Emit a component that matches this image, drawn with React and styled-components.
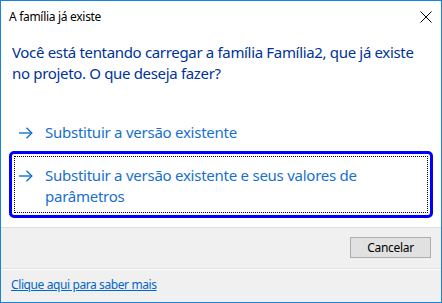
import styled, { createGlobalStyle } from 'styled-components'

const GlobalStyle = createGlobalStyle`
    html, body {
        margin: 0;
        padding: 0;
        background: #ffffff;
    }
    * {
        box-sizing: border-box;
    }
`

const Window = styled.div`
    width: 442px;
    height: 303px;
    border: 1px solid #1883d7;
    background: #ffffff;
    display: flex;
    flex-direction: column;
    font-family: "Noto Sans", "Open Sans", sans-serif;
`

const TitleBar = styled.div`
    height: 30px;
    display: flex;
    align-items: center;
    justify-content: space-between;
    padding: 0 9px 0 8px;
    font-size: 12px;
    letter-spacing: -0.3px;
    color: #000000;
`

const CloseButton = styled.button`
    border: none;
    background: transparent;
    padding: 0;
    width: 12px;
    height: 12px;
    display: flex;
    margin-top: 1px;
`

const Content = styled.div`
    flex: 1;
    padding: 11px 11px 0 11px;
`

const MainInstruction = styled.p`
    margin: 0 0 27px 0;
    font-size: 15px;
    line-height: 21px;
    letter-spacing: -0.33px;
    color: #003399;
`

const LinkList = styled.div`
    display: flex;
    flex-direction: column;
    gap: 3px;
`

const CommandLink = styled.button`
    position: relative;
    display: flex;
    align-items: flex-start;
    gap: 12px;
    width: 100%;
    border: none;
    background: transparent;
    text-align: left;
    padding: 11px 8px 8px 7px;
    font-family: inherit;
    font-size: 15px;
    line-height: 21px;
    letter-spacing: -0.25px;
    color: #1770cf;
    cursor: pointer;
    border-radius: 2px;
    outline: ${(p) => (p.$focused ? '3px solid #0000ff' : 'none')};

    &::after {
        content: '';
        display: ${(p) => (p.$focused ? 'block' : 'none')};
        position: absolute;
        inset: 2px;
        border: 1px dotted #000000;
    }
`

const Arrow = styled.svg`
    flex: none;
    margin-top: 5px;
`

const ButtonBar = styled.div`
    height: 41px;
    background: #f0f0f0;
    border-top: 1px solid #dfdfdf;
    display: flex;
    align-items: center;
    justify-content: flex-end;
    padding: 0 10px 1px 0;
`

const Button = styled.button`
    width: 81px;
    height: 21px;
    background: #e1e1e1;
    border: 1px solid #adadad;
    font-family: inherit;
    font-size: 12px;
    letter-spacing: -0.3px;
    color: #000000;
    padding: 0;
`

const Footer = styled.div`
    flex: none;
    height: 34px;
    background: #f0f0f0;
    border-top: 1px solid #dfdfdf;
    box-shadow: inset 0 1px 0 #ffffff;
    display: flex;
    align-items: center;
    padding: 0 0 2px 10px;
`

const HelpLink = styled.a`
    font-size: 12px;
    letter-spacing: -0.4px;
    color: #0066cc;
    text-decoration: underline;
`

const ArrowIcon = () => (
    <Arrow width="14" height="12" viewBox="0 0 14 12" fill="none" stroke="#1770cf" strokeWidth="1.4">
        <path d="M0 6 H13" />
        <path d="M7.5 0.8 L12.8 6 L7.5 11.2" />
    </Arrow>
)

const App = () => {
    return (
        <>
            <GlobalStyle />
            <Window>
                <TitleBar>
                    <span>A família já existe</span>
                    <CloseButton aria-label="Fechar">
                        <svg width="12" height="12" viewBox="0 0 12 12" stroke="#000" strokeWidth="1">
                            <path d="M0.5 0.5 L11.5 11.5 M11.5 0.5 L0.5 11.5" />
                        </svg>
                    </CloseButton>
                </TitleBar>
                <Content>
                    <MainInstruction>
                        Você está tentando carregar a família Família2, que já existe no projeto. O que deseja fazer?
                    </MainInstruction>
                    <LinkList>
                        <CommandLink>
                            <ArrowIcon />
                            <span>Substituir a versão existente</span>
                        </CommandLink>
                        <CommandLink $focused>
                            <ArrowIcon />
                            <span>Substituir a versão existente e seus valores de parâmetros</span>
                        </CommandLink>
                    </LinkList>
                </Content>
                <ButtonBar>
                    <Button>Cancelar</Button>
                </ButtonBar>
                <Footer>
                    <HelpLink href="#">Clique aqui para saber mais</HelpLink>
                </Footer>
            </Window>
        </>
    )
}

export default App
